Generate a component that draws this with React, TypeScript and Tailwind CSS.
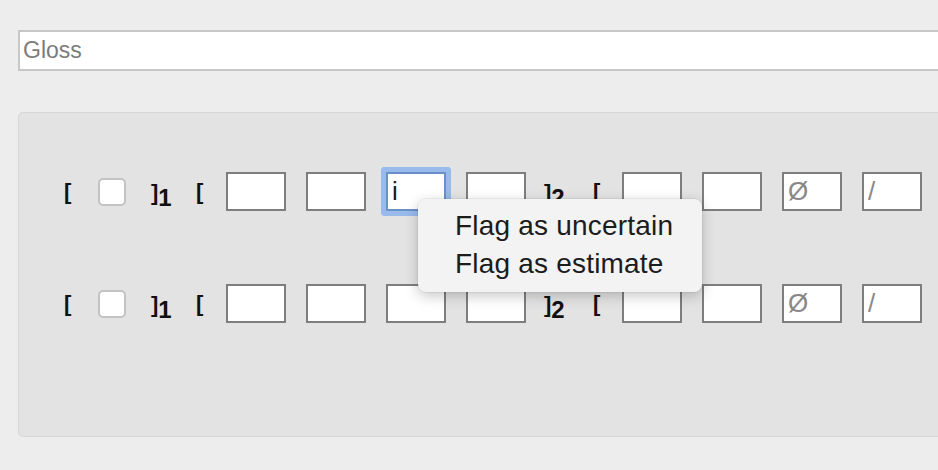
import React from "react";

const font = { fontFamily: '"Liberation Sans", Arial, sans-serif' };

function Box({ value, placeholder, focused, ml }: { value?: string; placeholder?: string; focused?: boolean; ml: string }) {
  return (
    <input
      readOnly
      value={value ?? ""}
      placeholder={placeholder}
      className={
        "h-[39px] w-[60px] shrink-0 bg-white px-[4px] text-[26px] font-normal text-[#1a1a1a] outline-none placeholder:text-[#888888] " +
        ml +
        (focused
          ? " rounded-[1px] border-2 border-[#6a90c8] shadow-[0_0_0_5px_#98bbec]"
          : " border-2 border-[#7e7e7e]")
      }
      style={font}
    />
  );
}

function Row({ focused, sub2 }: { focused?: boolean; sub2: string }) {
  return (
    <div className="flex h-[39px] items-center pl-[45px] text-[22px] font-bold text-[#111]" style={font}>
      <span className="w-[8px] shrink-0 leading-none">[</span>
      <div className="ml-[26px] h-[28px] w-[28px] shrink-0 rounded-[5px] border-2 border-[#c3c3c3] bg-white" />
      <span className="ml-[25px] mt-[8px] w-[22px] shrink-0 whitespace-nowrap leading-none">
        ]<span className="align-[-6px] text-[24px] font-bold">1</span>
      </span>
      <span className="ml-[23px] w-[8px] shrink-0 leading-none">[</span>
      <Box ml="ml-[22px]" />
      <Box ml="ml-[20px]" />
      <Box ml="ml-[20px]" value={focused ? "i" : ""} focused={focused} />
      <Box ml="ml-[20px]" />
      <span className="ml-[18px] mt-[8px] w-[26px] shrink-0 whitespace-nowrap leading-none">
        ]<span className="align-[-6px] text-[24px] font-bold">{sub2}</span>
      </span>
      <span className="ml-[23px] w-[8px] shrink-0 leading-none">[</span>
      <Box ml="ml-[21px]" />
      <Box ml="ml-[20px]" />
      <Box ml="ml-[20px]" placeholder="Ø" />
      <Box ml="ml-[20px]" placeholder="/" />
    </div>
  );
}

export default function App() {
  return (
    <div className="relative h-[470px] w-[938px] overflow-hidden bg-[#ededed]" style={font}>
      <div className="w-[1000px] pl-[18px] pt-[30px]">
        <input
          readOnly
          placeholder="Gloss"
          className="block h-[41px] w-full border-2 border-[#c7c7c7] bg-white px-[3px] text-[23px] outline-none placeholder:text-[#7c7c7c]"
          style={font}
        />
        <div className="mt-[41px] flex h-[325px] flex-col gap-[73px] rounded-[5px] border border-[#d7d7d7] bg-[#e3e3e3] pt-[59px]">
          <Row focused sub2="2" />
          <Row sub2="2" />
        </div>
      </div>

      <div className="absolute left-[418px] top-[199px] w-[284px] rounded-[8px] bg-[#f3f3f3] pb-[9px] pl-[37px] pt-[8px] text-[28px] leading-[38px] text-[#1c1c1c] shadow-[0_4px_14px_rgba(0,0,0,0.22),0_0_0_1px_rgba(0,0,0,0.05)]">
        <div className="tracking-[0.2px]">Flag as uncertain</div>
        <div className="tracking-[0.2px]">Flag as estimate</div>
      </div>
    </div>
  );
}
